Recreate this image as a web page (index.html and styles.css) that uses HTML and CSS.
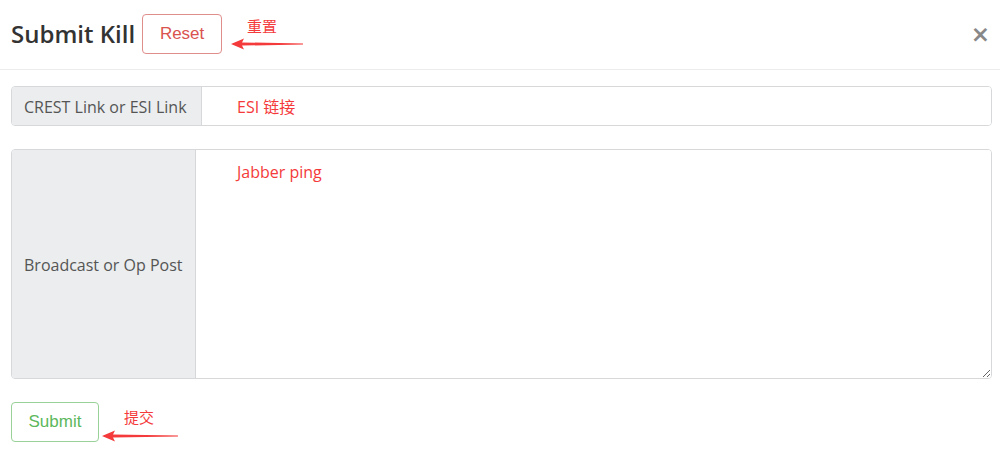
FILE: index.html
```html
<!DOCTYPE html>
<html>
<head>
<meta charset="utf-8">
<link rel="stylesheet" href="styles.css">
</head>
<body>
<div class="modal">
  <div class="header">
    <h1 class="title">Submit Kill</h1>
    <button class="btn btn-reset">Reset</button>
    <span class="note note-reset">重置</span>
    <svg class="arrow arrow-reset" width="72" height="12" viewBox="0 0 72 12"><path d="M0 6 L13 0.5 L11 4.4 L72 5.5 L72 6.5 L11 7.6 L13 11.5 Z" fill="#f43a3a"/></svg>
    <span class="close">×</span>
  </div>
  <div class="body">
    <div class="group group-input">
      <span class="addon addon-link">CREST Link or ESI Link</span>
      <input class="field field-input" type="text" value="ESI 链接">
    </div>
    <div class="group group-area">
      <span class="addon addon-post">Broadcast or Op Post</span>
      <textarea class="field field-area">Jabber ping</textarea>
    </div>
    <div class="footer">
      <button class="btn btn-submit">Submit</button>
      <span class="note note-submit">提交</span>
      <svg class="arrow arrow-submit" width="76" height="12" viewBox="0 0 76 12"><path d="M0 6 L13 0.5 L11 4.4 L76 5.5 L76 6.5 L11 7.6 L13 11.5 Z" fill="#f43a3a"/></svg>
    </div>
  </div>
</div>
</body>
</html>
```

FILE: styles.css
```css
* { box-sizing: border-box; }
html, body { margin: 0; padding: 0; background: #fff; }
body { font-family: "Open Sans", "Noto Sans", sans-serif; color: #333; }
.modal { width: 1000px; height: 451px; }
.header {
  position: relative;
  display: flex;
  align-items: center;
  height: 70px;
  padding: 0 10px 2px 11px;
  border-bottom: 1px solid #ececec;
}
.title {
  margin: 0;
  font-family: "Open Sans", sans-serif;
  font-weight: 600;
  font-size: 24px;
  color: #333;
}
.btn {
  height: 40px;
  background: #fff;
  border-radius: 4px;
  font-family: "Liberation Sans", Arial, sans-serif;
  font-size: 17px;
  cursor: pointer;
}
.btn-reset {
  margin-left: 7px;
  width: 80px;
  color: #d9534f;
  border: 1px solid #e08e8b;
}
.btn-submit {
  width: 88px;
  color: #5cb85c;
  border: 1px solid #99d199;
}
.note {
  position: absolute;
  font-family: "Noto Sans CJK SC", sans-serif;
  font-size: 15px;
  color: #f43a3a;
  line-height: 16px;
}
.note-reset { left: 247px; top: 18px; }
.note-submit { left: 113px; top: 7px; }
.arrow { position: absolute; }
.arrow-reset { left: 231px; top: 38px; }
.arrow-submit { left: 91px; top: 28px; }
.close {
  margin-left: auto;
  font-family: "DejaVu Sans", sans-serif;
  font-weight: bold;
  font-size: 23px;
  color: #888;
  line-height: 1;
  margin-top: 2px;
}
.body { padding: 16px 8px 0 11px; }
.group {
  display: flex;
  border: 1px solid #d6d8da;
  border-radius: 4px;
  overflow: hidden;
}
.group-input { height: 40px; }
.group-area { height: 230px; margin-top: 23px; }
.addon {
  display: flex;
  align-items: center;
  padding: 2px 12px 0;
  background: #ebedef;
  border-right: 1px solid #d6d8da;
  font-size: 16px;
  color: #555;
  white-space: nowrap;
}
.addon-link { width: 190px; }
.addon-post { width: 184px; }
.field {
  flex: 1;
  border: 0;
  outline: 0;
  font-family: "Open Sans", "Noto Sans CJK SC", sans-serif;
  font-size: 16px;
  color: #f43a3a;
  background: #fff;
}
.field-input { padding: 0 0 0 35px; }
.field-area { padding: 11px 0 0 41px; resize: vertical; }
.footer {
  position: relative;
  margin-top: 23px;
  height: 40px;
}
```
